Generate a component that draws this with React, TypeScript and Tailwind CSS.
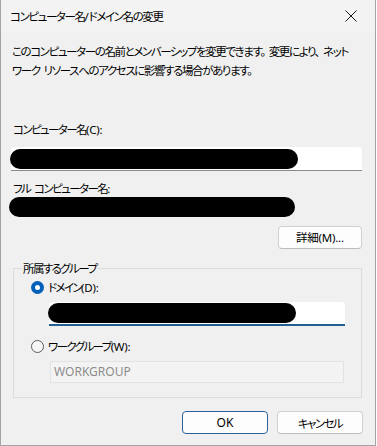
import { useState } from "react"

const jp = "font-['Noto_Sans_CJK_JP','Noto_Sans',sans-serif] [font-feature-settings:'palt']"

// Latin runs inside the Japanese labels keep their natural spacing
function L({ children }: { children: React.ReactNode }) {
  return <span className="font-['Noto_Sans',sans-serif] tracking-[-0.2px]">{children}</span>
}

function Gap() {
  return <span className="inline-block w-[4px]" />
}

function Radio({ checked }: { checked: boolean }) {
  if (checked) {
    return (
      <span className="flex h-[13px] w-[13px] shrink-0 items-center justify-center rounded-full bg-[#005fb8]">
        <span className="h-[5px] w-[5px] rounded-full bg-white" />
      </span>
    )
  }
  return <span className="h-[13px] w-[13px] shrink-0 rounded-full border border-[#5c5c5c] bg-[#f6f6f6]" />
}

function Redacted({ width }: { width: number }) {
  return <div className="h-[20px] rounded-full bg-black" style={{ width }} />
}

export default function App() {
  const [domain, setDomain] = useState(true)

  return (
    <div className={`${jp} flex h-[446px] w-[376px] flex-col border-r border-b border-l border-[#a4a4a4] bg-[#f0f0f0] text-[11.5px] leading-[16px] tracking-[-1.6px] text-black`}>
      {/* Title bar */}
      <div className="flex h-[32px] shrink-0 items-center justify-between bg-[#f3f3f3] pl-[9px] pr-[8px]">
        <span className="tracking-[-1.4px]">
          コンピューター名<L>/</L>ドメイン名の変更
        </span>
        <button className="flex h-[32px] w-[32px] items-center justify-center" aria-label="閉じる">
          <svg width="12" height="12" viewBox="0 0 12 12" fill="none" stroke="#1a1a1a" strokeWidth="1">
            <path d="M0.5 0.5 L11.5 11.5 M11.5 0.5 L0.5 11.5" />
          </svg>
        </button>
      </div>

      {/* Body */}
      <div className="flex flex-col pl-[10px] pr-[13px]">
        <p className="ml-[1px] mt-[10px] whitespace-nowrap leading-[19px] tracking-[-1.4px]">
          このコンピューターの名前とメンバーシップを変更できます。<Gap />変更により、<Gap />ネット
          <br />
          ワーク<Gap />リソースへのアクセスに影響する場合があります。
        </p>

        <label className="ml-[2px] mt-[41px]">
          コンピューター名<L>(C):</L>
        </label>
        <div className="mt-[9px] flex h-[24px] items-center rounded-t-[3px] border-b border-[#8a8a8a] bg-white">
          <div className="-ml-[1px]">
            <Redacted width={288} />
          </div>
        </div>

        <div className="ml-[2px] mt-[9px]">
          フル<Gap />コンピューター名<L>:</L>
        </div>
        <div className="-ml-[2px] mt-0">
          <Redacted width={286} />
        </div>

        <div className="mt-[9px] flex justify-end">
          <button className="h-[23px] w-[84px] rounded-[4px] border border-[#d0d0d0] border-b-[#bcbcbc] bg-[#fdfdfd] tracking-[-0.3px]">
            詳細<L>(M)...</L>
          </button>
        </div>

        <fieldset className="ml-[2px] mt-[11px] border border-[#dcdcdc] pb-[14px] pl-[8px]">
          <legend className="px-[1px] leading-[16px]">所属するグループ</legend>

          <div className="mt-[3px] flex items-center gap-[4px] pl-[9px]" onClick={() => setDomain(true)}>
            <Radio checked={domain} />
            <span>
              ドメイン<L>(D):</L>
            </span>
          </div>
          <div className="ml-[27px] mt-[6px] flex h-[24px] w-[296px] items-center rounded-t-[3px] border-b-2 border-[#1f5f93] bg-white">
            <div className="-ml-[1px]">
              <Redacted width={248} />
            </div>
          </div>

          <div className="mt-[12px] flex items-center gap-[4px] pl-[9px]" onClick={() => setDomain(false)}>
            <Radio checked={!domain} />
            <span>
              ワークグループ<L>(W):</L>
            </span>
          </div>
          <div className="ml-[28px] mt-[6px] flex h-[22px] w-[294px] items-center border border-[#e3e3e3] bg-[#f3f3f3] pl-[3px] font-['Noto_Sans',sans-serif] text-[12px] tracking-normal text-[#8c8c8c]">
            WORKGROUP
          </div>
        </fieldset>

        <div className="mt-[13px] flex justify-end gap-[9px]">
          <button className="h-[23px] w-[86px] rounded-[4px] border border-[#2a6496] bg-[#fdfdfd] font-['Noto_Sans',sans-serif] text-[12px] tracking-normal">
            OK
          </button>
          <button className="-mr-[1px] h-[23px] w-[86px] rounded-[4px] border border-[#d0d0d0] border-b-[#bcbcbc] bg-[#fdfdfd]">
            キャンセル
          </button>
        </div>
      </div>
    </div>
  )
}
